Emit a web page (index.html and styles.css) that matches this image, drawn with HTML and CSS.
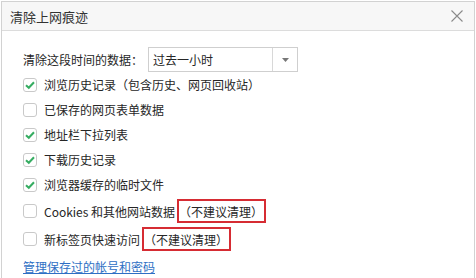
FILE: index.html
```html
<!DOCTYPE html>
<html lang="zh-CN">
<head>
<meta charset="utf-8">
<link rel="stylesheet" href="styles.css">
</head>
<body>
<div class="dialog">
  <div class="header">
    <span class="title">清除上网痕迹</span>
    <svg class="close" width="12" height="12" viewBox="0 0 12 12"><path d="M0.5 0.5 L11.5 11.5 M11.5 0.5 L0.5 11.5" stroke="#8a8a8a" stroke-width="1.1" fill="none"/></svg>
  </div>
  <div class="body">
    <div class="range">
      <span class="range-label">清除这段时间的数据：</span>
      <div class="select">
        <span class="select-value">过去一小时</span>
        <span class="select-arrow"><svg width="7" height="4" viewBox="0 0 7 4"><path d="M0 0 H7 L3.5 4 Z" fill="#777"/></svg></span>
      </div>
    </div>
    <div class="row"><span class="cb on"><svg width="14" height="14" viewBox="0 0 14 14"><path d="M3 7.2 L5.8 9.8 L11 4.2" stroke="#36ad62" stroke-width="2" fill="none"/></svg></span><span>浏览历史记录（包含历史、网页回收站）</span></div>
    <div class="row"><span class="cb"></span><span>已保存的网页表单数据</span></div>
    <div class="row"><span class="cb on"><svg width="14" height="14" viewBox="0 0 14 14"><path d="M3 7.2 L5.8 9.8 L11 4.2" stroke="#36ad62" stroke-width="2" fill="none"/></svg></span><span>地址栏下拉列表</span></div>
    <div class="row"><span class="cb on"><svg width="14" height="14" viewBox="0 0 14 14"><path d="M3 7.2 L5.8 9.8 L11 4.2" stroke="#36ad62" stroke-width="2" fill="none"/></svg></span><span>下载历史记录</span></div>
    <div class="row"><span class="cb on"><svg width="14" height="14" viewBox="0 0 14 14"><path d="M3 7.2 L5.8 9.8 L11 4.2" stroke="#36ad62" stroke-width="2" fill="none"/></svg></span><span>浏览器缓存的临时文件</span></div>
    <div class="row tall"><span class="cb"></span><span>Cookies 和其他网站数据</span><span class="warn">（不建议清理）</span></div>
    <div class="row tall"><span class="cb"></span><span>新标签页快速访问</span><span class="warn">（不建议清理）</span></div>
    <div class="link-row"><a class="link" href="#">管理保存过的帐号和密码</a></div>
  </div>
</div>
</body>
</html>
```
FILE: styles.css
```css
html, body {
  margin: 0;
  padding: 0;
  background: #ffffff;
}
body {
  font-family: "Noto Sans CJK SC", "Noto Sans", sans-serif;
  font-size: 12px;
  color: #262626;
}
.dialog {
  margin: 1px 0 0 1px;
  width: 474px;
  height: 277px;
  box-sizing: border-box;
  border: 1px solid #d2d2d2;
  border-bottom: none;
  overflow: hidden;
}
.header {
  height: 29px;
  box-sizing: border-box;
  border-bottom: 1px solid #dcdcdc;
  background: #f7f7f7;
  display: flex;
  align-items: center;
  justify-content: space-between;
  padding: 0 11px 0 8px;
  font-size: 13px;
  color: #333;
}
.title {
  line-height: 1;
  margin-top: 1px;
}
.close {
  display: block;
}
.body {
  padding: 16px 0 0 21px;
}
.range {
  display: flex;
  align-items: center;
  height: 25px;
}
.range-label {
  margin-right: 5px;
}
.select {
  width: 150px;
  height: 25px;
  box-sizing: border-box;
  border: 1px solid #cfcfcf;
  display: flex;
  align-items: center;
}
.select-value {
  flex: 1;
  padding-left: 4px;
}
.select-arrow {
  width: 24px;
  height: 100%;
  border-left: 1px solid #d8d8d8;
  display: flex;
  align-items: center;
  justify-content: center;
}
.select-arrow svg {
  display: block;
}
.row {
  display: flex;
  align-items: center;
  height: 25px;
}
.row.tall {
  height: 28px;
}
.cb {
  width: 14px;
  height: 14px;
  box-sizing: border-box;
  border: 1px solid #c9c9c9;
  border-radius: 3px;
  margin-right: 7px;
  position: relative;
  flex: none;
}
.cb svg {
  position: absolute;
  left: -1px;
  top: -1px;
}
.warn {
  height: 24px;
  box-sizing: border-box;
  border: 2px solid #d62c33;
  display: inline-flex;
  align-items: center;
  margin-left: 2px;
  padding: 0 1px 0 0;
}
.link-row {
  height: 26px;
  display: flex;
  align-items: center;
}
.link {
  color: #2e6fc4;
  text-decoration: underline;
}
```
